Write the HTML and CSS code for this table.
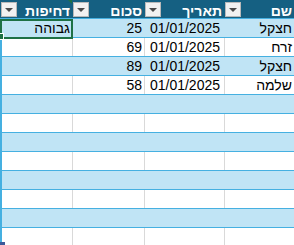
FILE: index.html
```html
<!DOCTYPE html>
<html lang="he" dir="rtl">
<head>
<meta charset="utf-8">
<link rel="stylesheet" href="styles.css">
</head>
<body>
<div class="sheet">
  <div class="row head">
    <div class="cell c-name"><span class="label">שם</span><span class="filter"><i></i></span></div>
    <div class="cell c-date"><span class="label">תאריך</span><span class="filter"><i></i></span></div>
    <div class="cell c-sum"><span class="label">סכום</span><span class="filter"><i></i></span></div>
    <div class="cell c-urg"><span class="label">דחיפות</span><span class="filter"><i></i></span><span class="flag"></span></div>
  </div>
  <div class="row band">
    <div class="cell c-name">חצקל</div>
    <div class="cell c-date"><span class="num">01/01/2025</span></div>
    <div class="cell c-sum">25</div>
    <div class="cell c-urg">גבוהה</div>
  </div>
  <div class="row">
    <div class="cell c-name">זרח</div>
    <div class="cell c-date"><span class="num">01/01/2025</span></div>
    <div class="cell c-sum">69</div>
    <div class="cell c-urg"></div>
  </div>
  <div class="row band">
    <div class="cell c-name">חצקל</div>
    <div class="cell c-date"><span class="num">01/01/2025</span></div>
    <div class="cell c-sum">89</div>
    <div class="cell c-urg"></div>
  </div>
  <div class="row">
    <div class="cell c-name">שלמה</div>
    <div class="cell c-date"><span class="num">01/01/2025</span></div>
    <div class="cell c-sum">58</div>
    <div class="cell c-urg"></div>
  </div>
  <div class="row band"><div class="cell c-name"></div><div class="cell c-date"></div><div class="cell c-sum"></div><div class="cell c-urg"></div></div>
  <div class="row"><div class="cell c-name"></div><div class="cell c-date"></div><div class="cell c-sum"></div><div class="cell c-urg"></div></div>
  <div class="row band"><div class="cell c-name"></div><div class="cell c-date"></div><div class="cell c-sum"></div><div class="cell c-urg"></div></div>
  <div class="row"><div class="cell c-name"></div><div class="cell c-date"></div><div class="cell c-sum"></div><div class="cell c-urg"></div></div>
  <div class="row band"><div class="cell c-name"></div><div class="cell c-date"></div><div class="cell c-sum"></div><div class="cell c-urg"></div></div>
  <div class="row"><div class="cell c-name"></div><div class="cell c-date"></div><div class="cell c-sum"></div><div class="cell c-urg"></div></div>
  <div class="row band"><div class="cell c-name"></div><div class="cell c-date"></div><div class="cell c-sum"></div><div class="cell c-urg"></div></div>
  <div class="row"><div class="cell c-name"></div><div class="cell c-date"></div><div class="cell c-sum"></div><div class="cell c-urg"></div></div>
  <div class="selection"><span class="handle"></span></div>
  <span class="resize"></span>
</div>
</body>
</html>
```

FILE: styles.css
```css
html, body {
  margin: 0;
  padding: 0;
  background: #ffffff;
}

body {
  width: 294px;
  height: 245px;
  overflow: hidden;
  direction: rtl;
  font-family: "Liberation Sans", Arial, sans-serif;
  font-size: 14px;
  color: #000000;
}

.sheet {
  position: relative;
  width: 294px;
}

.row {
  display: flex;
  height: 19px;
  box-sizing: border-box;
  border-bottom: 1px solid #45b0e1;
  background: #ffffff;
}

.row.band {
  background: #c0e4f5;
}

.cell {
  box-sizing: border-box;
  height: 18px;
  line-height: 18px;
  border-left: 1px solid #d9d9d9;
  padding-right: 2px;
  text-align: right;
  white-space: nowrap;
  overflow: hidden;
}

.band .cell {
  border-left-color: transparent;
}

.c-name { width: 70px; }
.c-date { width: 80px; padding-right: 4px; }
.c-sum { width: 72px; padding-right: 2px; }
.c-urg { width: 72px; border-left: 2px solid #45b0e1; }
.band .c-urg { border-left-color: #45b0e1; }

.num {
  direction: ltr;
  unicode-bidi: isolate;
}

/* header */
.row.head {
  background: #156082;
}

.head .cell {
  display: flex;
  justify-content: space-between;
  align-items: flex-start;
  border-left: 1px solid transparent;
  color: #ffffff;
  font-weight: bold;
  padding-right: 2px;
}

.head .c-urg {
  position: relative;
  padding-right: 2px;
}

.head .label {
  line-height: 18px;
  padding-top: 2px;
}

.filter {
  display: flex;
  align-items: center;
  justify-content: center;
  width: 16px;
  height: 15px;
  margin-top: 2px;
  box-sizing: border-box;
  background: #f1f1f1;
  border: 1px solid #b9b9b9;
}

.filter i {
  width: 0;
  height: 0;
  border-left: 4px solid transparent;
  border-right: 4px solid transparent;
  border-top: 4px solid #4a4a4a;
}

.flag {
  position: absolute;
  top: 0;
  right: 0;
  width: 0;
  height: 0;
  border-top: 4px solid #1e7145;
  border-left: 4px solid transparent;
}

/* active cell selection */
.selection {
  position: absolute;
  left: 0;
  top: 19px;
  width: 73px;
  height: 20px;
  box-sizing: border-box;
  border: 2px solid #1e7145;
}

.handle {
  position: absolute;
  left: -4px;
  top: 13px;
  width: 5px;
  height: 5px;
  background: #1e7145;
  box-shadow: 0 0 0 1px #ffffff;
}

.resize {
  position: absolute;
  left: 0;
  top: 242px;
  width: 5px;
  height: 4px;
  background: #3b5a9a;
}
```
